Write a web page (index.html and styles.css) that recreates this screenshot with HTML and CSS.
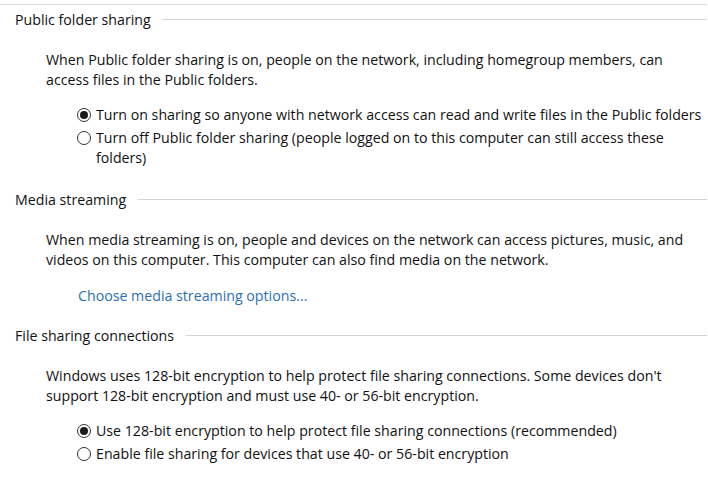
FILE: index.html
```
<!DOCTYPE html>
<html>
<head>
<meta charset="utf-8">
<link rel="stylesheet" href="styles.css">
</head>
<body>
<div class="page">
  <div class="top-rule"></div>

  <section class="group">
    <div class="group-head"><span class="group-title">Public folder sharing</span><span class="group-line"></span></div>
    <p class="desc">When Public folder sharing is on, people on the network, including homegroup members, can<br>access files in the Public folders.</p>
    <div class="options">
      <label class="option"><span class="radio checked"></span><span class="option-text">Turn on sharing so anyone with network access can read and write files in the Public folders</span></label>
      <label class="option"><span class="radio"></span><span class="option-text">Turn off Public folder sharing (people logged on to this computer can still access these<br>folders)</span></label>
    </div>
  </section>

  <section class="group">
    <div class="group-head"><span class="group-title">Media streaming</span><span class="group-line"></span></div>
    <p class="desc">When media streaming is on, people and devices on the network can access pictures, music, and<br>videos on this computer. This computer can also find media on the network.</p>
    <a class="link" href="#">Choose media streaming options...</a>
  </section>

  <section class="group">
    <div class="group-head"><span class="group-title">File sharing connections</span><span class="group-line"></span></div>
    <p class="desc">Windows uses 128-bit encryption to help protect file sharing connections. Some devices don't<br>support 128-bit encryption and must use 40- or 56-bit encryption.</p>
    <div class="options">
      <label class="option"><span class="radio checked"></span><span class="option-text">Use 128-bit encryption to help protect file sharing connections (recommended)</span></label>
      <label class="option"><span class="radio"></span><span class="option-text">Enable file sharing for devices that use 40- or 56-bit encryption</span></label>
    </div>
  </section>
</div>
</body>
</html>
```
FILE: styles.css
```
html, body {
  margin: 0;
  padding: 0;
  background: #ffffff;
}
.page {
  width: 708px;
  height: 479px;
  overflow: hidden;
  font-family: "Open Sans", "Noto Sans", sans-serif;
  font-size: 14.2px;
  line-height: 20px;
  color: #111111;
  padding-top: 4px;
  box-sizing: border-box;
}
.top-rule {
  border-top: 1px solid #dadada;
  margin-right: 1px;
}
.group {
  padding-top: 5px;
  padding-bottom: 20px;
}
.group + .group {
  padding-top: 0;
}
.group-head {
  display: flex;
  align-items: center;
  height: 20px;
  padding-left: 15px;
  margin-right: 1px;
}
.group-title {
  white-space: nowrap;
}
.group-line {
  flex: 1;
  border-top: 1px solid #d2d2d2;
  margin-left: 12px;
  margin-top: -1px;
}
.desc {
  margin: 20px 0 0 46px;
  white-space: nowrap;
}
.options {
  margin-top: 15px;
  margin-bottom: 2px;
  margin-left: 77px;
  display: flex;
  flex-direction: column;
  gap: 3px;
}
.option {
  display: flex;
  align-items: flex-start;
  white-space: nowrap;
}
.radio {
  width: 14px;
  height: 14px;
  border: 1px solid #333333;
  border-radius: 50%;
  box-sizing: border-box;
  margin-top: 3px;
  margin-right: 5px;
  display: flex;
  align-items: center;
  justify-content: center;
  flex: none;
}
.radio.checked::after {
  content: "";
  width: 8px;
  height: 8px;
  border-radius: 50%;
  background: #1a1a1a;
}
.link {
  display: block;
  margin: 16px 0 0 78px;
  color: #2b6fb3;
  text-decoration: none;
}
```
